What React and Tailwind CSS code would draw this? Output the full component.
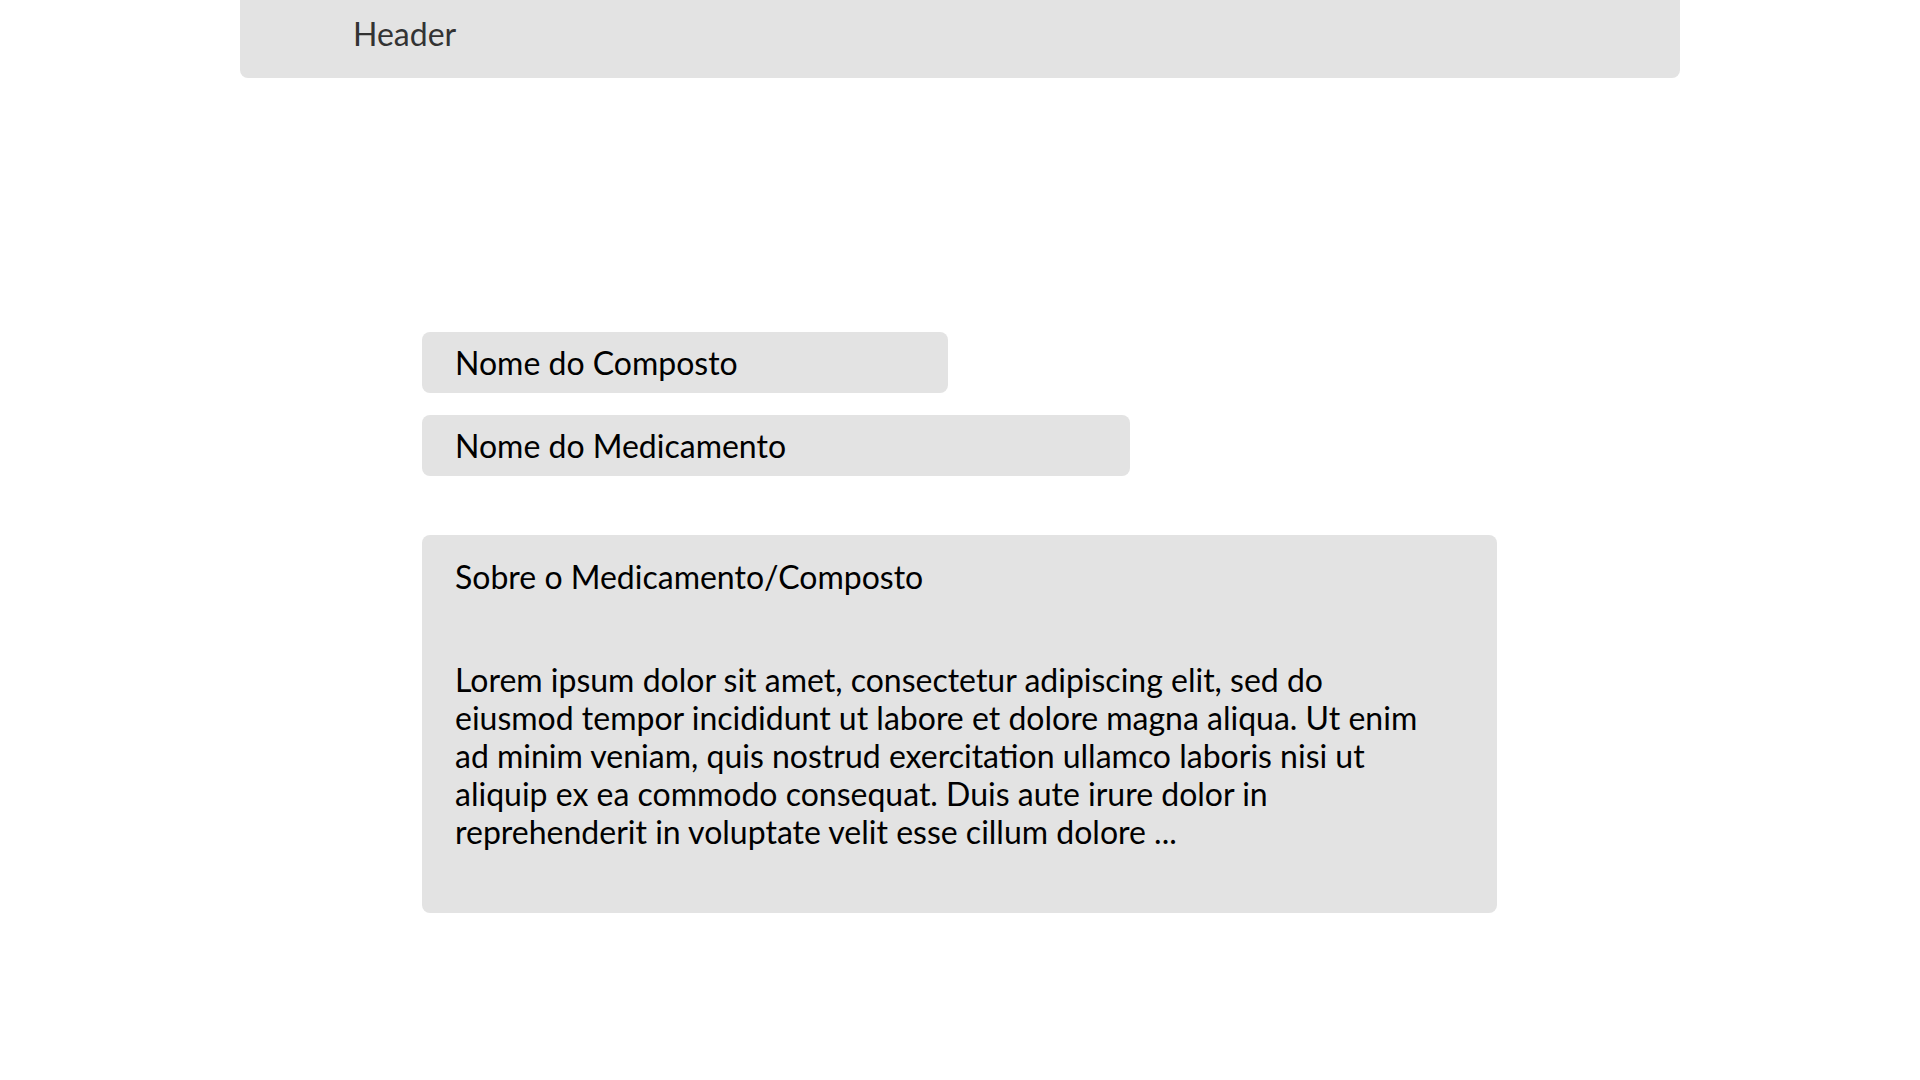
import React from "react";

function Field({ label, width }) {
  return (
    <div className={`${width} h-[61px] rounded-lg bg-[#e3e3e3] flex items-center pl-[33px]`}>
      <span className="text-[32px] leading-none text-black">{label}</span>
    </div>
  );
}

export default function App() {
  return (
    <div className="min-h-screen bg-white font-['Lato',sans-serif]">
      <header className="mx-auto w-[1440px] h-[78px] rounded-b-lg bg-[#e3e3e3] flex items-start pl-[113px] pt-[14px]">
        <span className="text-[32px] leading-[40px] text-[#333333]">Header</span>
      </header>

      <main className="w-[1440px] mx-auto pl-[182px] pt-[254px]">
        <div className="flex flex-col gap-[22px]">
          <Field label="Nome do Composto" width="w-[526px]" />
          <Field label="Nome do Medicamento" width="w-[708px]" />
        </div>

        <section className="mt-[59px] w-[1075px] h-[378px] rounded-lg bg-[#e3e3e3] pl-[33px] pt-[23px]">
          <h2 className="text-[32px] leading-[38px] text-black">Sobre o Medicamento/Composto</h2>
          <p className="mt-[65px] w-[985px] text-[32px] leading-[38px] text-black">
            Lorem ipsum dolor sit amet, consectetur adipiscing elit, sed do eiusmod tempor incididunt ut labore et dolore magna aliqua. Ut enim ad minim veniam, quis nostrud exercitation ullamco laboris nisi ut aliquip ex ea commodo consequat. Duis aute irure dolor in reprehenderit in voluptate velit esse cillum dolore ...
          </p>
        </section>
      </main>
    </div>
  );
}
